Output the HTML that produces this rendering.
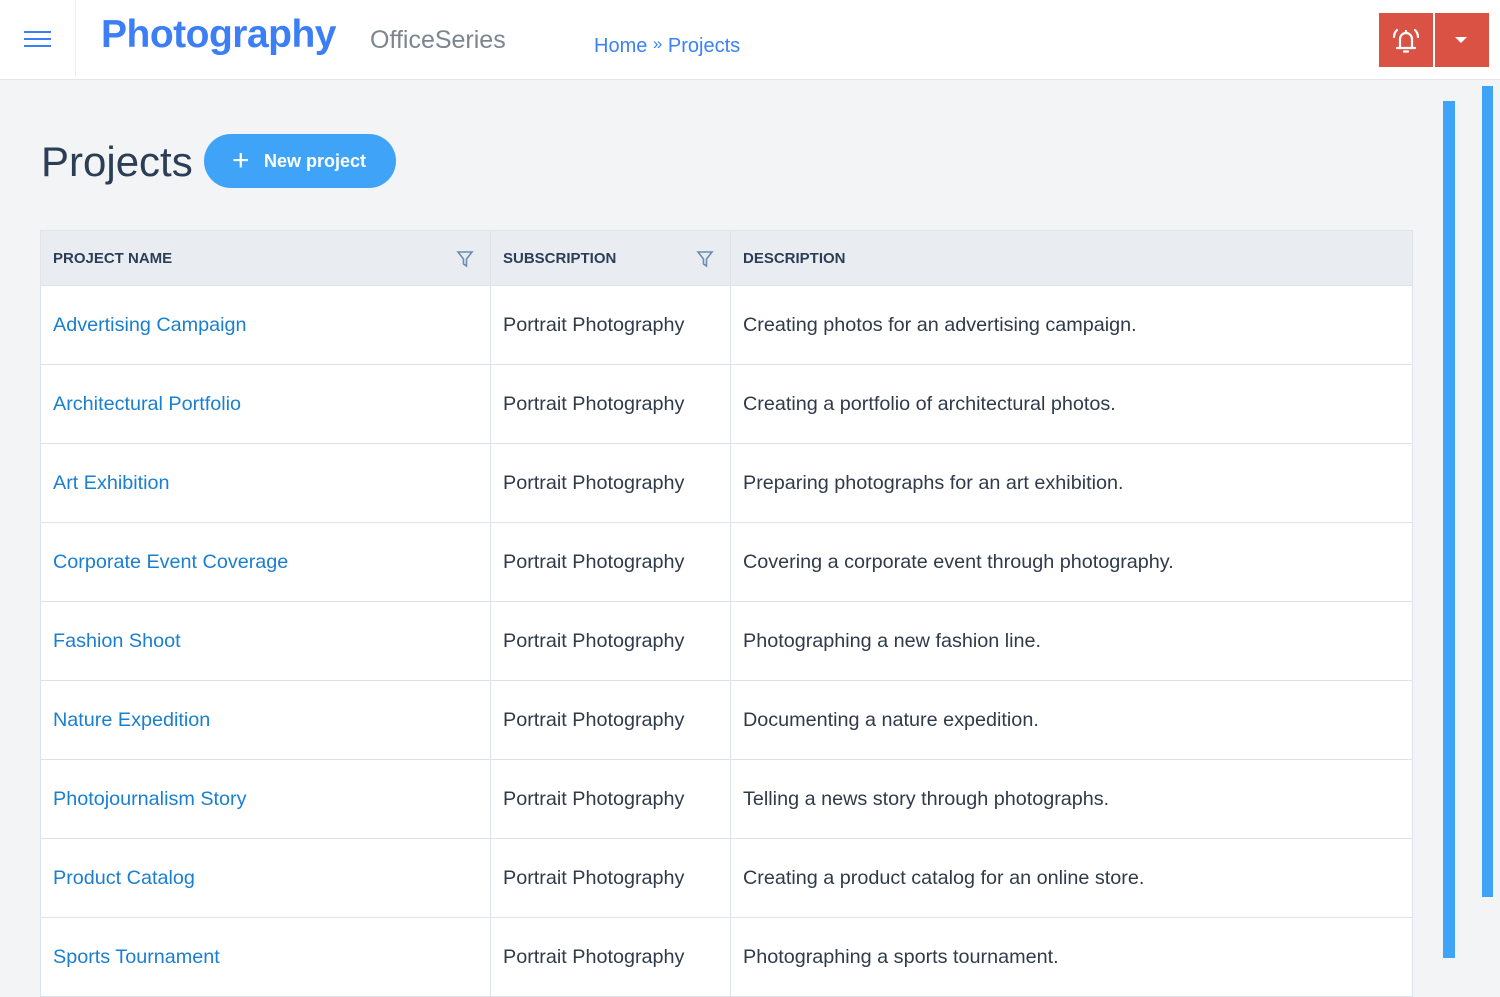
<!DOCTYPE html>
<html><head><meta charset="utf-8"><style>
*{box-sizing:border-box;margin:0;padding:0}
body{width:1500px;height:975px;overflow:hidden;background:#f3f4f6;font-family:"Liberation Sans",sans-serif;position:relative}
.hdr{position:absolute;left:0;top:0;width:1500px;height:80px;background:#fff;border-bottom:1px solid #e3e6ea}
.ham{position:absolute;left:24px;top:31px;width:27px}
.ham i{display:block;height:2px;background:#3b7ef5;margin-bottom:5px}
.div{position:absolute;left:75px;top:0;width:1px;height:76px;background:#eceef1}
.logo{position:absolute;left:101px;top:13px;font-size:39px;font-weight:bold;color:#3b7ef5;letter-spacing:-0.5px}
.off{position:absolute;left:370px;top:26px;font-size:25px;color:#7c8590}
.bc{position:absolute;left:594px;top:35px;font-size:20px;color:#3b82f6}
.rb{position:absolute;top:13px;width:54px;height:54px;background:#d95244}
h1{position:absolute;left:41px;top:138px;font-size:42px;font-weight:normal;color:#2c3e55}
.btn{position:absolute;left:204px;top:134px;width:192px;height:54px;border-radius:27px;background:#3fa3f7;color:#fff;font-weight:bold;font-size:18px;line-height:54px;padding-left:60px}
.btn b{position:absolute;left:28px;top:0;font-size:30px;font-weight:normal}
table{position:absolute;left:40px;top:230px;width:1373px;border-collapse:collapse;background:#fff}
th,td{border:1px solid #dde3ea;text-align:left;padding:0 12px}
th{height:55px;background:#e9edf2;font-size:15px;color:#2c3e55;font-weight:bold;position:relative}
td{height:79px;font-size:19.8px;color:#2f3b4a}
td.l{color:#1a7fd0}
.f{position:absolute;right:16px;top:19px}
.sb{position:absolute;background:#3fa3f7}
</style></head><body>
<div class="hdr">
<div class="ham"><i></i><i></i><i></i></div>
<div class="div"></div>
<div class="logo">Photography</div>
<div class="off">OfficeSeries</div>
<div class="bc">Home <span style="font-size:17px;position:relative;top:-3px">»</span> Projects</div>
<div class="rb" style="left:1379px"><svg width="54" height="54" viewBox="0 0 54 54" fill="none" stroke="#fff" stroke-width="2.2" stroke-linecap="round"><path d="M18 35h18M21 35v-9a6 6 0 0 1 12 0v9"/><path d="M25 38.5h4"/><path d="M27 18v2"/><path d="M18 17a10 10 0 0 0-3 7M36 17a10 10 0 0 1 3 7"/></svg></div>
<div class="rb" style="left:1435px"><svg width="54" height="54"><path d="M20 24h12l-6 6z" fill="#fff"/></svg></div>
</div>
<h1>Projects</h1>
<div class="btn"><b>+</b>New project</div>
<table>
<tr><th style="width:450px">PROJECT NAME<svg class="f" width="18" height="18" viewBox="0 0 18 18" fill="none" stroke="#6b8bb0" stroke-width="1.6"><path d="M2 2h14l-5.5 7v7l-3-2v-5z"/></svg></th><th style="width:240px">SUBSCRIPTION<svg class="f" width="18" height="18" viewBox="0 0 18 18" fill="none" stroke="#6b8bb0" stroke-width="1.6"><path d="M2 2h14l-5.5 7v7l-3-2v-5z"/></svg></th><th>DESCRIPTION</th></tr>
<tr><td class="l">Advertising Campaign</td><td>Portrait Photography</td><td>Creating photos for an advertising campaign.</td></tr>
<tr><td class="l">Architectural Portfolio</td><td>Portrait Photography</td><td>Creating a portfolio of architectural photos.</td></tr>
<tr><td class="l">Art Exhibition</td><td>Portrait Photography</td><td>Preparing photographs for an art exhibition.</td></tr>
<tr><td class="l">Corporate Event Coverage</td><td>Portrait Photography</td><td>Covering a corporate event through photography.</td></tr>
<tr><td class="l">Fashion Shoot</td><td>Portrait Photography</td><td>Photographing a new fashion line.</td></tr>
<tr><td class="l">Nature Expedition</td><td>Portrait Photography</td><td>Documenting a nature expedition.</td></tr>
<tr><td class="l">Photojournalism Story</td><td>Portrait Photography</td><td>Telling a news story through photographs.</td></tr>
<tr><td class="l">Product Catalog</td><td>Portrait Photography</td><td>Creating a product catalog for an online store.</td></tr>
<tr><td class="l">Sports Tournament</td><td>Portrait Photography</td><td>Photographing a sports tournament.</td></tr>
</table>
<div class="sb" style="left:1443px;top:101px;width:12px;height:857px"></div>
<div class="sb" style="left:1482px;top:86px;width:11px;height:811px"></div>
</body></html>
